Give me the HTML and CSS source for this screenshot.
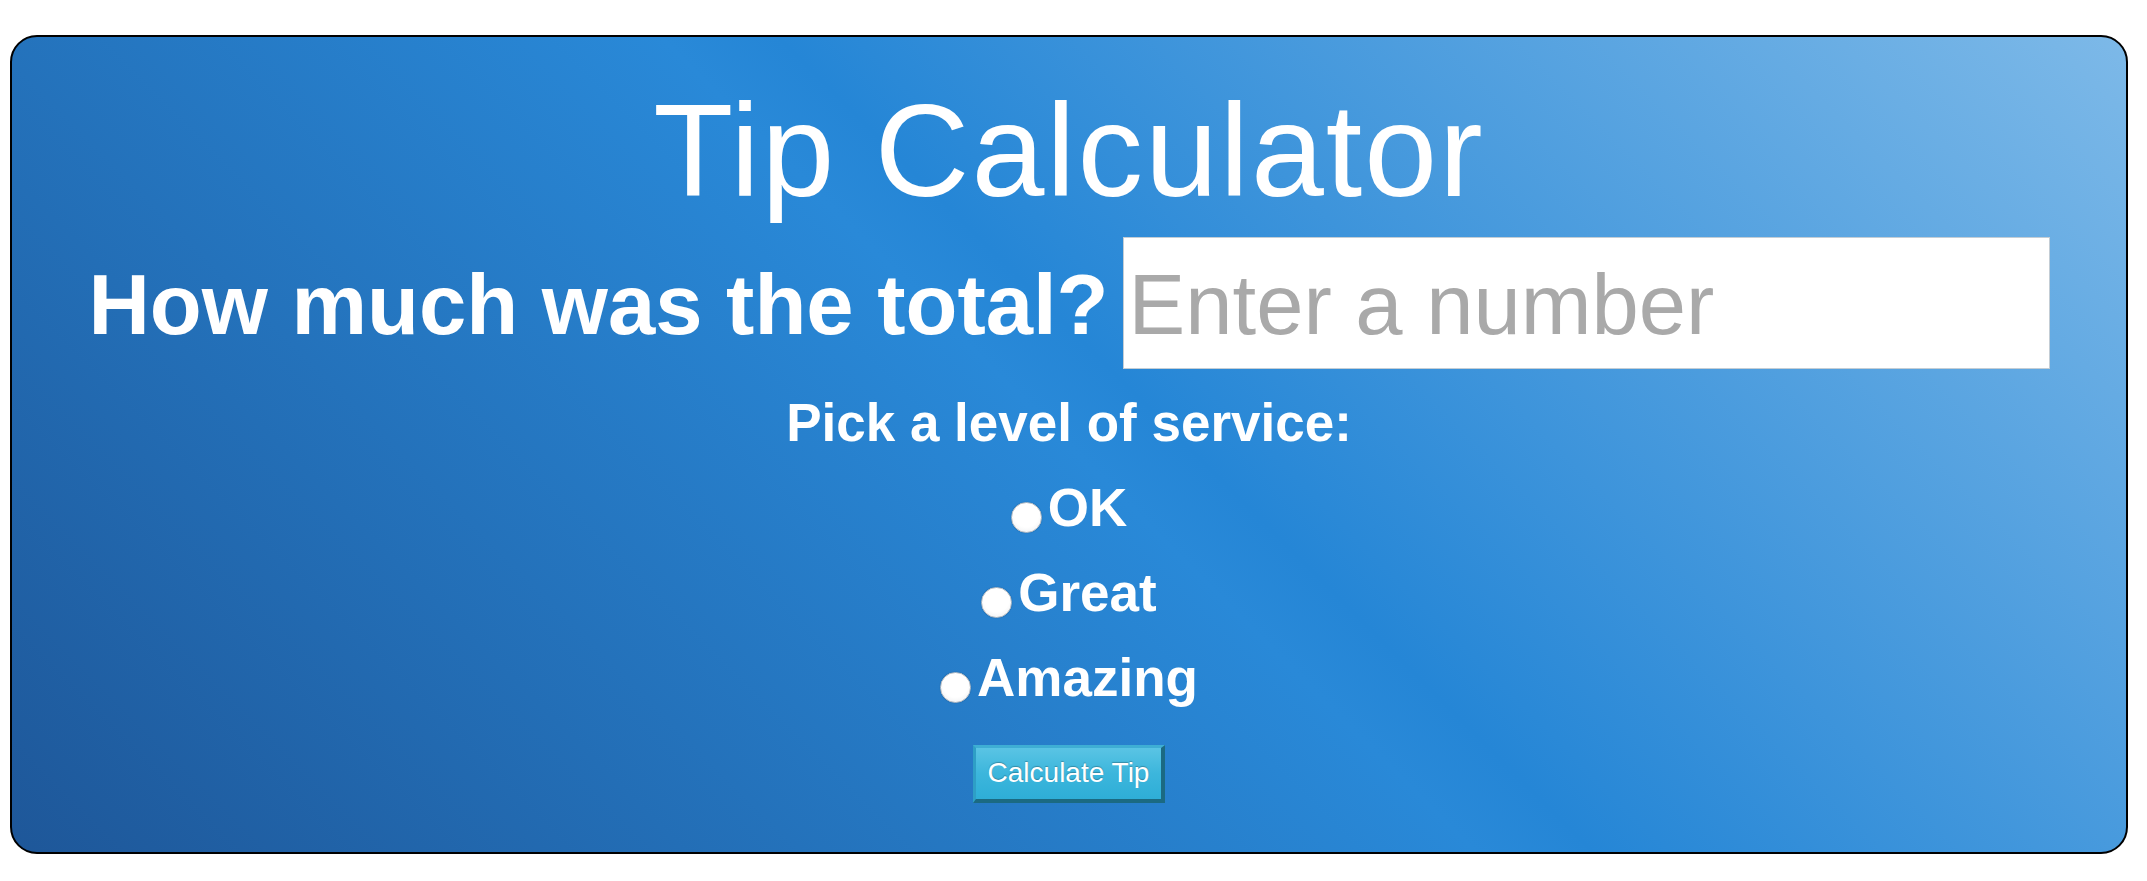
FILE: index.html
```html
<!DOCTYPE html>
<html lang="en">
<head>
<meta charset="utf-8">
<title>Tip Calculator</title>
<link rel="stylesheet" href="styles.css">
</head>
<body>
<div class="card">
  <h1 class="title">Tip Calculator</h1>
  <div class="total-row">
    <h2 class="total-label">How much was the total?</h2>
    <input class="total-input" type="text" placeholder="Enter a number">
  </div>
  <p class="service-label">Pick a level of service:</p>
  <label class="option"><input class="radio" type="radio" name="service" value="ok">OK</label>
  <label class="option"><input class="radio" type="radio" name="service" value="great">Great</label>
  <label class="option"><input class="radio" type="radio" name="service" value="amazing">Amazing</label>
  <div class="actions">
    <button class="calc-btn" type="button">Calculate Tip</button>
  </div>
</div>
</body>
</html>
```

FILE: styles.css
```css
html, body {
  margin: 0;
  padding: 0;
  background: #ffffff;
}

body {
  font-family: "Liberation Sans", Arial, Helvetica, sans-serif;
  color: #ffffff;
}

.card {
  margin: 35px 19px 27px 10px;
  padding: 38px 0 49px;
  border: 2px solid #000000;
  border-radius: 27px;
  background: linear-gradient(45deg, #1e5799 0%, #2989d8 50%, #2586d6 54%, #7db9e8 100%);
  text-align: center;
}

.title {
  margin: 0;
  font-size: 131px;
  font-weight: normal;
  letter-spacing: 2px;
  line-height: 152px;
}

.total-row {
  display: flex;
  justify-content: center;
  align-items: baseline;
  gap: 14px;
  margin-top: 10px;
}

.total-label {
  margin: 0;
  font-size: 85px;
  font-weight: bold;
  line-height: normal;
  white-space: nowrap;
}

.total-input {
  box-sizing: border-box;
  width: 927px;
  margin: 0;
  padding: 18px 5px 14px;
  border: 1px solid #c3cdd5;
  border-radius: 0;
  background: #ffffff;
  font-family: "Liberation Sans", Arial, Helvetica, sans-serif;
  font-size: 85px;
  line-height: normal;
  color: #333333;
  outline: none;
}

.total-input::placeholder {
  color: #a9a9a9;
  opacity: 1;
}

.service-label {
  margin: 11px 0 0;
  font-size: 53px;
  font-weight: bold;
  line-height: 85px;
}

.option {
  display: block;
  font-size: 53px;
  font-weight: bold;
  line-height: 85px;
}

.radio {
  -webkit-appearance: none;
  appearance: none;
  display: inline-block;
  box-sizing: border-box;
  width: 31px;
  height: 31px;
  margin: 0 6px 0 0;
  padding: 0;
  border: 1px solid #b9bec4;
  border-radius: 50%;
  background: radial-gradient(circle at 50% 40%, #ffffff 0%, #ffffff 55%, #e9eaec 100%);
  box-shadow: 0 0 1px rgba(0, 0, 0, 0.3);
  vertical-align: -7px;
}

.actions {
  margin-top: 25px;
}

.calc-btn {
  display: inline-block;
  margin: 0;
  padding: 9px 12px 10px;
  border-style: solid;
  border-width: 3px 4px 4px 3px;
  border-color: #3eaed4 #1b6a82 #1b6a82 #2e9fc6;
  border-radius: 0;
  background: linear-gradient(to bottom, #5ac4e4 0%, #3cb6dc 50%, #2eaed7 100%);
  color: #ffffff;
  font-family: "Liberation Sans", Arial, Helvetica, sans-serif;
  font-size: 28px;
  line-height: normal;
  text-shadow: 0 -1px 1px rgba(0, 0, 0, 0.25);
  cursor: pointer;
}
```
